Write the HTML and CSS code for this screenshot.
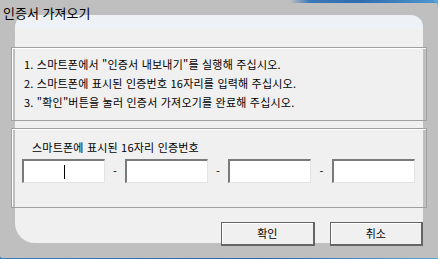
FILE: index.html
```html
<!DOCTYPE html>
<html lang="ko">
<head>
<meta charset="utf-8">
<title>인증서 가져오기</title>
<link rel="stylesheet" href="styles.css">
</head>
<body>
<div class="window">
  <div class="titlebar">인증서 가져오기</div>
  <div class="client">
    <div class="group steps">
      <div class="line">1. 스마트폰에서 "인증서 내보내기"를 실행해 주십시오.</div>
      <div class="line">2. 스마트폰에 표시된 인증번호 16자리를 입력해 주십시오.</div>
      <div class="line">3. "확인"버튼을 눌러 인증서 가져오기를 완료해 주십시오.</div>
    </div>
    <div class="group code">
      <div class="label">스마트폰에 표시된 16자리 인증번호</div>
      <div class="inputs">
        <div class="field"><span class="caret"></span></div>
        <span class="dash">-</span>
        <div class="field"></div>
        <span class="dash">-</span>
        <div class="field"></div>
        <span class="dash">-</span>
        <div class="field"></div>
      </div>
    </div>
    <div class="buttons">
      <div class="btn">확인</div>
      <div class="btn">취소</div>
    </div>
  </div>
</div>
</body>
</html>
```
FILE: styles.css
```css
html, body {
  margin: 0;
  padding: 0;
}
body {
  width: 438px;
  height: 259px;
  overflow: hidden;
  background: linear-gradient(90deg, #3d7bb8, #2a65a8 60%, #5ea6d6);
  font-family: "Noto Sans CJK KR", "Noto Sans", sans-serif;
  color: #000;
}
.window {
  width: 438px;
  height: 258px;
  background: #bfbfbf;
  background-image: linear-gradient(90deg, #bfbfbf 0, #bfbfbf 290px, #3b78b8 310px, #2f6db0 360px, #4f97cf 100%);
  background-size: 100% 3px;
  background-repeat: no-repeat;
  border-top-right-radius: 7px;
  border-bottom-left-radius: 2px;
}
.titlebar {
  height: 15px;
  padding-left: 3px;
  font-size: 13px;
  line-height: 16px;
  box-sizing: border-box;
  position: relative;
  top: 5px;
  z-index: 1;
}
.client {
  margin: 0 15px;
  height: 228px;
  background: linear-gradient(180deg, #eef2f6 0, #eef2f6 13px, #f0f0f0 14px);
  border-radius: 12px 12px 20px 20px;
  padding-top: 32px;
  box-sizing: border-box;
  position: relative;
  z-index: 0;
}
.group {
  margin: 0 -4px 0 -4px;
  border: 1px solid #a0a0a0;
  box-shadow: inset 1px 1px 0 #fff;
  box-sizing: border-box;
}
.steps {
  height: 74px;
  padding: 7px 0 0 12px;
  font-size: 11px;
  line-height: 19px;
  letter-spacing: 0.2px;
}
.code {
  margin-top: 7px;
  height: 80px;
  padding: 10px 0 0 10px;
  font-size: 11px;
  letter-spacing: 0.2px;
}
.label {
  line-height: 16px;
  padding-left: 10px;
}
.inputs {
  display: flex;
  align-items: center;
  margin-top: 4px;
}
.field {
  width: 83px;
  height: 24px;
  box-sizing: border-box;
  background: #fff;
  border-top: 2px solid #7a7a7a;
  border-left: 2px solid #7a7a7a;
  border-right: 1px solid #e3e3e3;
  border-bottom: 1px solid #e3e3e3;
  position: relative;
}
.caret {
  position: absolute;
  left: 40px;
  top: 4px;
  width: 1px;
  height: 14px;
  background: #000;
}
.dash {
  width: 20px;
  text-align: center;
  font-size: 11px;
}
.dash:nth-of-type(3) {
  width: 21px;
}
.buttons {
  display: flex;
  gap: 15px;
  margin-top: 14px;
  padding-left: 206px;
}
.btn {
  width: 96px;
  height: 24px;
  box-sizing: border-box;
  background: #f0f0f0;
  border: 1px solid #646464;
  border-right-width: 2px;
  border-bottom-width: 2px;
  box-shadow: inset 1px 1px 0 #fff;
  font-size: 11px;
  line-height: 21px;
  text-align: center;
}
```
